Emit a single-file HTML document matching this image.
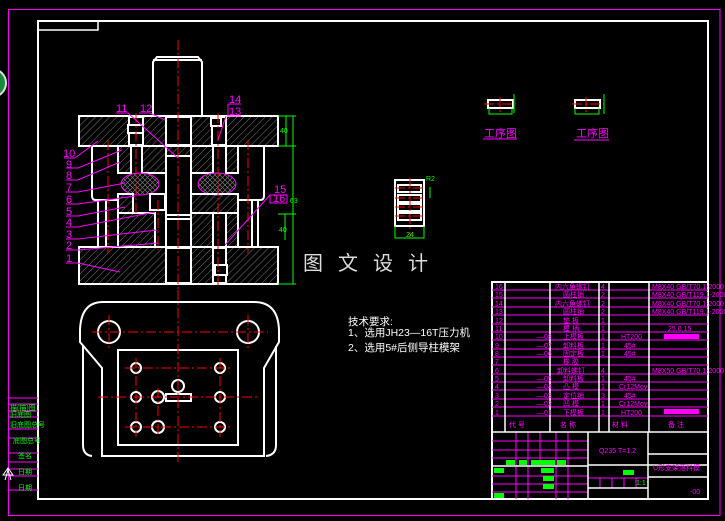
<!DOCTYPE html>
<html><head><meta charset="utf-8"><style>
html,body{margin:0;padding:0;background:#000;width:725px;height:521px;overflow:hidden}
svg{display:block}
.w{fill:none;stroke:#fff;stroke-width:2}
.h{fill:url(#hat);stroke:#fff;stroke-width:2}
.r{stroke:#f00;stroke-width:1;stroke-dasharray:10 3 2 3;fill:none}
.m{stroke:#f0f;stroke-width:1;fill:none}
.g{stroke:#0f0;stroke-width:1;fill:none}
.mt{fill:#f0f;font-family:"Liberation Sans","Noto Sans CJK SC",sans-serif;font-size:11px}
.tt{fill:#f0f;font-family:"Liberation Sans","Noto Sans CJK SC",sans-serif;font-size:7px}
.gt{fill:#0f0;font-family:"Liberation Sans","Noto Sans CJK SC",sans-serif;font-size:7px}
</style></head><body>
<svg width="725" height="521" viewBox="0 0 725 521" xmlns="http://www.w3.org/2000/svg">
<defs>
<pattern id="hat" width="5" height="5" patternUnits="userSpaceOnUse" patternTransform="rotate(45)">
<line x1="0" y1="0" x2="0" y2="5" stroke="#999" stroke-width="0.8"/></pattern>
<pattern id="xh" width="5" height="5" patternUnits="userSpaceOnUse">
<path d="M0 0L5 5M5 0L0 5" stroke="#777" stroke-width="0.7"/></pattern>
</defs>
<rect x="8.5" y="9.5" width="711.5" height="506" fill="none" stroke="#f0f" stroke-width="1"/>
<rect x="38" y="21" width="670" height="478" fill="none" stroke="#fff" stroke-width="2"/>
<rect x="38" y="21" width="60" height="9" fill="none" stroke="#fff" stroke-width="1.5"/>
<circle cx="-8" cy="83" r="14" fill="#1a8a3a" stroke="#ddd" stroke-width="2"/>
<g stroke="#f0f" stroke-width="1">
<line x1="8" y1="398" x2="38" y2="398"/><line x1="8" y1="404" x2="38" y2="404"/><line x1="8" y1="411" x2="38" y2="411"/><line x1="8" y1="417" x2="38" y2="417"/><line x1="8" y1="429" x2="38" y2="429"/><line x1="8" y1="438" x2="38" y2="438"/><line x1="8" y1="453" x2="38" y2="453"/><line x1="8" y1="462" x2="38" y2="462"/><line x1="8" y1="469" x2="38" y2="469"/><line x1="8" y1="476" x2="38" y2="476"/><line x1="8" y1="490" x2="38" y2="490"/>
</g>
<text x="10" y="410" class="gt">描(描)图</text><text x="10" y="417" class="gt">旧底图</text><text x="10" y="427" class="gt">旧底图总号</text><text x="13" y="443" class="gt">底图总号</text><text x="18" y="458" class="gt">签名</text><text x="18" y="474" class="gt">日期</text><text x="18" y="490" class="gt">日期</text>
<path d="M3 475L8 468L13 475Z M5 480L8 470L11 480" fill="none" stroke="#fff" stroke-width="1"/>

<path class="w" d="M153 116V62L157 57H198L202 62V116 M153 60H202"/>
<rect class="h" x="79" y="116" width="199" height="30"/>
<rect x="129" y="117" width="14" height="28" fill="#000" stroke="#fff" stroke-width="2"/>
<rect x="166" y="117" width="25" height="28" fill="#000" stroke="#fff" stroke-width="2"/>
<rect x="212" y="117" width="14" height="28" fill="#000" stroke="#fff" stroke-width="2"/>
<rect x="128" y="125" width="15" height="8" fill="#000" stroke="#fff" stroke-width="2"/>
<rect x="211" y="118" width="10" height="8" fill="#000" stroke="#fff" stroke-width="2"/>
<path class="w" d="M92 146V196Q92 200 96 200H118 M264 146V196Q264 200 260 200H238"/>
<path class="w" d="M98 200V247 M106 200V247 M258 200V247 M252 200V247"/>
<rect class="h" x="118" y="146" width="13" height="27"/>
<rect class="h" x="142" y="146" width="24" height="27"/>
<rect class="h" x="191" y="146" width="22" height="27"/>
<rect class="h" x="226" y="146" width="12" height="27"/>
<rect class="h" x="166" y="146" width="25" height="10"/>
<ellipse cx="140" cy="184" rx="19" ry="11" fill="url(#xh)" stroke="#f0f" stroke-width="1"/>
<ellipse cx="217" cy="184" rx="19" ry="11" fill="url(#xh)" stroke="#f0f" stroke-width="1"/>
<rect class="h" x="118" y="194" width="15" height="19"/>
<rect class="h" x="191" y="194" width="47" height="19"/>
<rect class="w" x="150" y="194" width="15" height="16"/>
<path class="w" d="M166 156V247 M191 156V247 M166 215H191 M166 219H191"/>
<rect class="h" x="118" y="213" width="37" height="34"/>
<rect class="h" x="191" y="213" width="22" height="34"/>
<rect class="h" x="226" y="213" width="12" height="34"/>
<rect class="h" x="79" y="247" width="199" height="37"/>
<rect x="166" y="248" width="25" height="35" fill="#000" stroke="#fff" stroke-width="2"/>
<rect x="213" y="248" width="13" height="35" fill="#000" stroke="#fff" stroke-width="2"/>
<rect x="215" y="265" width="12" height="10" fill="#000" stroke="#fff" stroke-width="2"/>
<g class="r">
<line x1="178" y1="40" x2="178" y2="300"/><line x1="108" y1="140" x2="108" y2="253"/><line x1="248" y1="140" x2="248" y2="253"/>
<line x1="136" y1="113" x2="136" y2="215"/><line x1="218" y1="113" x2="218" y2="285"/><line x1="158" y1="200" x2="158" y2="250"/>
</g>
<g class="g"><path d="M278 116H296 M278 146H296 M278 214H296 M278 284H296 M293 116V284 M286 116V146 M285 214V240"/></g>
<text x="280" y="133" class="gt">40</text><text x="290" y="203" class="gt">63</text><text x="279" y="232" class="gt">40</text>
<g class="m">
<path d="M64 158H75L98 141 M66 168H78L122 150 M66 180H78L120 162 M66 192H78L125 183 M66 204H78L135 196 M66 216H78L125 207 M66 227H78L155 212 M66 239H78L157 230 M66 250H78L158 243 M66 263H78L120 272"/>
<path d="M116 113H128L178 158 M139 113H150L165 120 M228 104H241 M228 104V116H241 M226 116L218 140 M270 195H287V203H270Z M270 195L225 245"/>
</g>
<g class="mt"><text x="63" y="157">10</text><text x="66" y="168">9</text><text x="66" y="179">8</text><text x="66" y="191">7</text><text x="66" y="203">6</text><text x="66" y="215">5</text><text x="66" y="226">4</text><text x="66" y="238">3</text><text x="66" y="249">2</text><text x="66" y="262">1</text>
<text x="116" y="112">11</text><text x="140" y="112">12</text><text x="229" y="103">14</text><text x="229" y="115">13</text><text x="274" y="193">15</text><text x="273" y="202">16</text></g>

<path class="w" d="M103 302H254Q278 302 279 330V342L264 368V456Q264 456 260 456H102V368L80 342V330Q81 302 103 302Z"/>
<path class="w" d="M83 346V445Q83 455 92 456 M276 346V445Q276 455 266 456"/>
<circle cx="109" cy="332" r="11" class="w"/><circle cx="248" cy="332" r="11" class="w"/>
<rect class="w" x="118" y="350" width="120" height="95"/>
<g class="w" stroke-width="1.5">
<circle cx="136" cy="368" r="5"/><circle cx="220" cy="368" r="5"/><circle cx="136" cy="397" r="5"/><circle cx="158" cy="397" r="6"/><circle cx="178" cy="386" r="6"/><circle cx="220" cy="397" r="5"/><circle cx="136" cy="427" r="5"/><circle cx="158" cy="427" r="6"/><circle cx="220" cy="427" r="5"/>
<rect x="166" y="394" width="25" height="7"/></g>
<g class="r"><line x1="178" y1="290" x2="178" y2="465"/><line x1="92" y1="332" x2="268" y2="332"/><line x1="98" y1="397" x2="260" y2="397"/><line x1="125" y1="368" x2="230" y2="368"/><line x1="125" y1="427" x2="230" y2="427"/><line x1="136" y1="358" x2="136" y2="437"/><line x1="220" y1="358" x2="220" y2="437"/><line x1="158" y1="388" x2="158" y2="437"/><line x1="109" y1="315" x2="109" y2="350"/><line x1="248" y1="315" x2="248" y2="350"/></g>

<text x="303" y="270" fill="#ddd" font-family="'Noto Sans CJK SC',sans-serif" font-size="20" letter-spacing="15">图文设计</text>
<g fill="#fff" font-family="'Liberation Sans','Noto Sans CJK SC',sans-serif" font-size="10.5"><text x="348" y="325">技术要求:</text><text x="348" y="336">1、选用JH23—16T压力机</text><text x="348" y="351">2、选用5#后侧导柱模架</text></g>

<rect class="w" x="488" y="100" width="25" height="8"/><rect class="w" x="575" y="100" width="25" height="8"/>
<g class="r"><line x1="484" y1="104" x2="516" y2="104"/><line x1="500" y1="97" x2="500" y2="112"/><line x1="572" y1="104" x2="604" y2="104"/><line x1="586" y1="97" x2="586" y2="112"/></g>
<g class="g"><path d="M489 108V114H512V108 M514 94V113 M599 108V114H575V108 M604 94V114"/></g>
<text x="484" y="137" class="mt" font-size="10">工序图</text><line x1="483" y1="139" x2="517" y2="139" class="m"/>
<text x="576" y="137" class="mt" font-size="10">工序图</text><line x1="574" y1="140" x2="609" y2="140" class="m"/>
<rect class="w" x="395" y="180" width="29" height="46"/>
<g class="w" stroke-width="1.5"><rect x="398" y="185" width="23" height="7"/><rect x="398" y="195" width="23" height="7"/><rect x="398" y="204" width="23" height="7"/><rect x="398" y="213" width="23" height="7"/></g>
<g class="r"><line x1="395" y1="188" x2="424" y2="188"/><line x1="395" y1="198" x2="424" y2="198"/><line x1="395" y1="207" x2="424" y2="207"/><line x1="395" y1="216" x2="424" y2="216"/><line x1="410" y1="178" x2="410" y2="238"/></g>
<g class="g"><path d="M395 226V238H424V226 M430 187V198"/></g><text x="426" y="181" class="gt">R2</text><text x="406" y="237" class="gt">24</text>

<rect x="492" y="282" width="216" height="217" fill="none" stroke="#fff" stroke-width="2"/>
<g stroke="#f0f" stroke-width="1">
<line x1="492" y1="290" x2="708" y2="290"/><line x1="492" y1="298" x2="708" y2="298"/><line x1="492" y1="307" x2="708" y2="307"/><line x1="492" y1="315" x2="708" y2="315"/><line x1="492" y1="324" x2="708" y2="324"/><line x1="492" y1="332" x2="708" y2="332"/><line x1="492" y1="340" x2="708" y2="340"/><line x1="492" y1="349" x2="708" y2="349"/><line x1="492" y1="357" x2="708" y2="357"/><line x1="492" y1="365" x2="708" y2="365"/><line x1="492" y1="374" x2="708" y2="374"/><line x1="492" y1="382" x2="708" y2="382"/><line x1="492" y1="390" x2="708" y2="390"/><line x1="492" y1="399" x2="708" y2="399"/><line x1="492" y1="407" x2="708" y2="407"/><line x1="492" y1="416" x2="708" y2="416"/>
<line x1="492" y1="441" x2="588" y2="441"/><line x1="492" y1="450" x2="588" y2="450"/><line x1="492" y1="458" x2="588" y2="458"/><line x1="492" y1="476" x2="588" y2="476"/><line x1="492" y1="484" x2="588" y2="484"/><line x1="492" y1="492" x2="588" y2="492"/>
<line x1="516" y1="432" x2="516" y2="499"/><line x1="528" y1="432" x2="528" y2="499"/><line x1="540" y1="432" x2="540" y2="464"/><line x1="556" y1="432" x2="556" y2="499"/><line x1="568" y1="432" x2="568" y2="499"/>
<line x1="588" y1="478" x2="648" y2="478"/><line x1="600" y1="478" x2="600" y2="488"/><line x1="612" y1="478" x2="612" y2="488"/><line x1="624" y1="478" x2="624" y2="488"/><line x1="636" y1="478" x2="636" y2="488"/>
</g>
<g stroke="#fff" stroke-width="1.5">
<line x1="505" y1="282" x2="505" y2="432"/><line x1="550" y1="282" x2="550" y2="432"/><line x1="599" y1="282" x2="599" y2="432"/><line x1="609" y1="282" x2="609" y2="432"/><line x1="649" y1="282" x2="649" y2="432"/>
<line x1="492" y1="432" x2="708" y2="432"/><line x1="588" y1="432" x2="588" y2="499"/><line x1="648" y1="432" x2="648" y2="499"/>
<line x1="588" y1="465" x2="708" y2="465"/><line x1="648" y1="454" x2="708" y2="454"/><line x1="648" y1="477" x2="708" y2="477"/><line x1="588" y1="488" x2="648" y2="488"/><line x1="492" y1="466" x2="588" y2="466"/>
</g>
<g class="tt">
<text x="495" y="289">16</text><text x="495" y="297">15</text><text x="495" y="306">14</text><text x="495" y="314">13</text><text x="495" y="323">12</text><text x="495" y="331">11</text><text x="495" y="339">10</text><text x="495" y="348">9</text><text x="495" y="356">8</text><text x="495" y="364">7</text><text x="495" y="373">6</text><text x="495" y="381">5</text><text x="495" y="389">4</text><text x="495" y="398">3</text><text x="495" y="406">2</text><text x="495" y="415">1</text>
<text x="555" y="289">内六角螺钉</text><text x="563" y="297">圆柱销</text><text x="555" y="306">内六角螺钉</text><text x="563" y="314">圆柱销</text><text x="563" y="323">垫  板</text><text x="563" y="331">模  柄</text><text x="563" y="339">上模板</text><text x="563" y="348">卸料板</text><text x="563" y="356">固定板</text><text x="563" y="364">橡  胶</text><text x="557" y="373">卸料螺钉</text><text x="563" y="381">卸料板</text><text x="563" y="389">凸  模</text><text x="563" y="398">定位销</text><text x="563" y="406">凹  模</text><text x="563" y="415">下模板</text>
<text x="537" y="339">—08</text><text x="537" y="348">—07</text><text x="537" y="356">—06</text><text x="537" y="381">—05</text><text x="537" y="389">—04</text><text x="537" y="398">—03</text><text x="537" y="406">—02</text><text x="537" y="415">—01</text>
<text x="601" y="289">4</text><text x="601" y="297">2</text><text x="601" y="306">2</text><text x="601" y="314">2</text><text x="601" y="323">1</text><text x="601" y="331">1</text><text x="601" y="339">1</text><text x="601" y="348">1</text><text x="601" y="356">1</text><text x="601" y="373">4</text><text x="601" y="381">1</text><text x="601" y="389">1</text><text x="601" y="398">3</text><text x="601" y="406">1</text><text x="601" y="415">1</text>
<text x="621" y="339">HT200</text><text x="624" y="348">45#</text><text x="624" y="356">45#</text><text x="624" y="381">45#</text><text x="619" y="389">Cr12Mov</text><text x="624" y="398">45#</text><text x="619" y="406">Cr12Mov</text><text x="621" y="415">HT200</text>
<text x="652" y="289">M8X40 GB/T70.1-2000</text><text x="652" y="297">M8X40 GB/T119.1-2000</text><text x="652" y="306">M8X40 GB/T70.1-2000</text><text x="652" y="314">M8X40 GB/T119.1-2000</text><text x="668" y="331">25.0.15</text><text x="652" y="373">M8X50 GB/T70.1-2000</text>
<text x="509" y="427">代  号</text><text x="560" y="427">名  称</text><text x="612" y="427">材  料</text><text x="668" y="427">备  注</text>
</g>
<rect x="664" y="334" width="35" height="5" fill="#f0f"/><rect x="664" y="409" width="35" height="5" fill="#f0f"/>
<text x="599" y="453" class="tt" font-size="9">Q235  T=1.2</text>
<text x="653" y="470" class="tt" font-size="8">U形支架落料模</text>
<text x="690" y="494" class="tt" font-size="8">-00</text>
<text x="636" y="485" class="gt">1:1</text>
<g fill="#0f0"><rect x="506" y="460" width="9" height="5"/><rect x="519" y="460" width="8" height="5"/><rect x="531" y="460" width="24" height="5"/><rect x="557" y="460" width="9" height="5"/><rect x="494" y="468" width="10" height="5"/><rect x="541" y="468" width="13" height="5"/><rect x="543" y="476" width="11" height="5"/><rect x="543" y="484" width="11" height="5"/><rect x="494" y="493" width="10" height="5"/><rect x="623" y="470" width="11" height="5"/></g>
</svg>
</body></html>
